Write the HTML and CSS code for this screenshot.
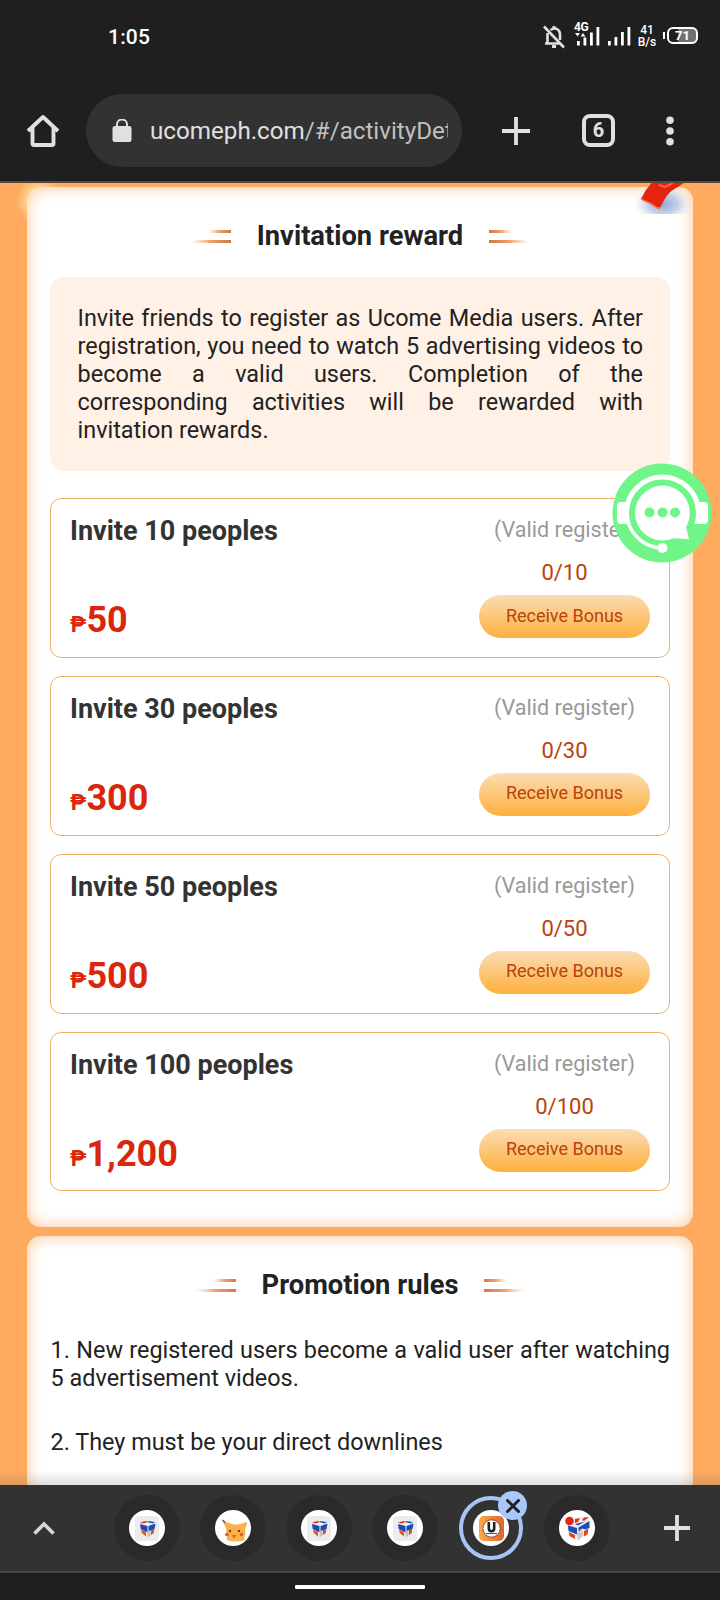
FILE: index.html
```html
<!DOCTYPE html>
<html lang="en">
<head>
<meta charset="utf-8">
<title>Invitation reward</title>
<link rel="stylesheet" href="styles.css">
</head>
<body>
<svg class="defs" width="0" height="0" aria-hidden="true">
  <symbol id="cube" viewBox="0 0 36 36">
    <rect x="6" y="6" width="24" height="25" rx="4" fill="#ececec"/>
    <path d="M11 14l1-2.500 8-1.500 6 2v2l-1 8.500-6 4.500-6-4z" fill="#f3efec"/>
    <path d="M11 12.500l5.500-1.400 3 .6-5 1.900z" fill="#e2342a"/>
    <path d="M19 11l7 1-2.500 1.500-4.500-1.200z" fill="#2451b8"/>
    <path d="M11 14l7.500 2v6.500L11.700 19z" fill="#1d4bb4"/>
    <path d="M26.500 13.500l-7 2.500v5.500l6-2.500z" fill="#1d4bb4"/>
    <path d="M12 19.500l5 2.500v4.500L12.800 23z" fill="#e4542e"/>
    <path d="M18.500 21.500l3-1.500v5.500l-3 2z" fill="#c9c1b8"/>
    <path d="M22 20.500l3.300-1.500-.6 4-2.700 2z" fill="#c8502e"/>
  </symbol>
</svg>

<header class="chrome">
  <div class="status">
    <span class="clock">1:05</span>
    <div class="status-icons">
      <svg class="bell" width="24" height="24" viewBox="0 0 24 24" fill="none" stroke="#e0e0e0" stroke-width="2.600">
        <path d="M2 1.500L22 22.500"/>
        <path d="M8.500 5C14 1.500 18 5 18 9.500V15M5.500 8v10.500h12M3 18.500h3"/>
        <path d="M12 1v3M10 21.500h4" stroke-width="3"/>
      </svg>
      <svg class="signals" width="58" height="26" viewBox="0 0 58 26" fill="#fff">
        <text x="0" y="9" class="net">4G</text>
        <path d="M1 11h5l-2.500 3.500zM6.500 14.500h5L9 11z"/>
        <path d="M3 19h2.800v4.500H3zM9.500 15.500h2.800v8H9.500zM16 10.500h2.800v13H16zM22.500 5h2.800v18.500h-2.800z"/>
        <path d="M34 19h2.800v4.500H34zM40.500 15h2.800v8.500h-2.800zM47 10h2.800v13.500H47zM53.500 5h2.800v18.500h-2.800z"/>
      </svg>
      <span class="speed">41<br>B/s</span>
      <span class="battery">71</span>
    </div>
  </div>
  <div class="toolbar">
    <svg class="home" width="34" height="34" viewBox="0 0 34 34" fill="none" stroke="#e0e0e0" stroke-width="3.900" stroke-linejoin="round">
      <path d="M2 17L17 3l15 14"/><path d="M6.500 14v15.500q0 1.500 1.500 1.500h18q1.500 0 1.500-1.500V14"/>
    </svg>
    <div class="omnibox">
      <svg width="20" height="24" viewBox="0 0 20 24"><rect x=".5" y="7" width="19" height="16" rx="2.500" fill="#e0e0e0"/><path d="M5 8V5.500a5 5 0 0 1 10 0V8" fill="none" stroke="#e0e0e0" stroke-width="2"/></svg>
      <span class="url">ucomeph.com<span class="path">/#/activityDet</span></span>
    </div>
    <svg class="plus" width="30" height="30" viewBox="0 0 30 30" stroke="#e0e0e0" stroke-width="3.800"><path d="M1 15h28M15 1v28"/></svg>
    <span class="tabcount">6</span>
    <svg class="more" width="8" height="30" viewBox="0 0 8 30" fill="#e0e0e0"><circle cx="4" cy="4.200" r="3.800"/><circle cx="4" cy="15" r="3.800"/><circle cx="4" cy="25.800" r="3.800"/></svg>
  </div>
</header>

<main class="page">
  <section class="card reward">
    <svg class="envelope" width="62" height="31" viewBox="0 0 62 31">
      <defs><radialGradient id="sh"><stop offset="0" stop-color="#8fa8d4"/><stop offset=".5" stop-color="#b4c4e2" stop-opacity=".8"/><stop offset="1" stop-color="#dfe6f5" stop-opacity="0"/></radialGradient></defs>
      <ellipse cx="35" cy="21" rx="30" ry="19" fill="url(#sh)"/>
      <path d="M23.500 0Q17 7 13.500 15q0 1 1 1.800 8 3 15 8.200 2 .5 3-1Q38 12 44 7.500L56 0z" fill="#e3240f"/>
      <path d="M13.500 15q0 1 1 1.800 8 3 15 8.200 2 .5 3-1" fill="none" stroke="#f0703c" stroke-width="1.500"/>
      <path d="M31 2l6 2 8-4" fill="none" stroke="#f0684a" stroke-width="2"/>
    </svg>
    <h2 class="title"><svg class="deco" width="42" height="16"><use href="#lines"/></svg><span>Invitation reward</span><svg class="deco flip" width="42" height="16"><use href="#lines"/></svg></h2>
    <p class="notice">Invite friends to register as Ucome Media users. After registration, you need to watch 5 advertising videos to become a valid users. Completion of the corresponding activities will be rewarded with invitation rewards.</p>
    <div class="tiers">
      <article class="tier">
        <div class="left"><h3>Invite 10 peoples</h3><div class="price"><small>₱</small>50</div></div>
        <div class="right"><span class="valid">(Valid register)</span><span class="count">0/10</span><button class="bonus">Receive Bonus</button></div>
      </article>
      <article class="tier">
        <div class="left"><h3>Invite 30 peoples</h3><div class="price"><small>₱</small>300</div></div>
        <div class="right"><span class="valid">(Valid register)</span><span class="count">0/30</span><button class="bonus">Receive Bonus</button></div>
      </article>
      <article class="tier">
        <div class="left"><h3>Invite 50 peoples</h3><div class="price"><small>₱</small>500</div></div>
        <div class="right"><span class="valid">(Valid register)</span><span class="count">0/50</span><button class="bonus">Receive Bonus</button></div>
      </article>
      <article class="tier">
        <div class="left"><h3>Invite 100 peoples</h3><div class="price"><small>₱</small>1,200</div></div>
        <div class="right"><span class="valid">(Valid register)</span><span class="count">0/100</span><button class="bonus">Receive Bonus</button></div>
      </article>
    </div>
  </section>

  <section class="card rules">
    <h2 class="title"><svg class="deco" width="42" height="16"><use href="#lines"/></svg><span>Promotion rules</span><svg class="deco flip" width="42" height="16"><use href="#lines"/></svg></h2>
    <p>1. New registered users become a valid user after watching 5 advertisement videos.</p>
    <p>2. They must be your direct downlines</p>
  </section>

  <svg class="support" width="100" height="100" viewBox="0 0 100 100">
    <circle cx="50" cy="50" r="49.500" fill="#70f588"/>
    <path d="M14.500 50A36 36 0 0 1 86.500 50" fill="none" stroke="#fff" stroke-width="5"/>
    <path d="M15.500 58C21 74 33 84 49 85" fill="none" stroke="#fff" stroke-width="3.500"/>
    <path d="M15 39H9q-4 0-4 4v14q0 4 4 4h9.500q-3-11 0-22zM86 39h6q4 0 4 4v14q0 4-4 4h-9.500q3-11 0-22z" fill="#fff"/>
    <circle cx="50.500" cy="85" r="5" fill="#fff"/>
    <path d="M50.500 22.500a27.500 27.500 0 1 0 11 52.700l15.500 1-3-12.200A27.500 27.500 0 0 0 50.500 22.500z" fill="#fff"/>
    <circle cx="37.500" cy="49.500" r="5" fill="#70f588"/><circle cx="50.500" cy="49.500" r="5" fill="#70f588"/><circle cx="63" cy="49.500" r="5" fill="#70f588"/>
  </svg>
</main>

<nav class="tabs">
  <svg class="chevron" width="22" height="14" viewBox="0 0 22 14" fill="none" stroke="#d8d8d8" stroke-width="3.600"><path d="M1.500 12.500L11 3l9.500 9.500"/></svg>
  <span class="divider"></span>
  <div class="tablist">
    <div class="tab"><svg width="36" height="36"><use href="#cube"/></svg></div>
    <div class="tab"><svg width="36" height="36" viewBox="0 0 36 36">
      <path d="M7 10l7 3 5 1.500h5L31 12l1 1-2 7q1 4-1 8l1 2q-10 3-18 0l-1-12-4-8z" fill="#fbb24c"/>
      <path d="M6.500 9.500l3 1.200 .5 2.800z" fill="#4a3020"/>
      <circle cx="15" cy="21" r="1.200" fill="#6a3d20"/><circle cx="24" cy="21" r="1.200" fill="#6a3d20"/><circle cx="12" cy="24.500" r="1.800" fill="#e05a2c"/><circle cx="26.500" cy="24.500" r="1.800" fill="#e05a2c"/><path d="M16.500 25h5l-2.500 3.500z" fill="#d96a45"/>
    </svg></div>
    <div class="tab"><svg width="36" height="36"><use href="#cube"/></svg></div>
    <div class="tab"><svg width="36" height="36"><use href="#cube"/></svg></div>
    <div class="tab active"><svg width="36" height="36" viewBox="0 0 36 36">
      <defs><linearGradient id="ug"><stop offset="0" stop-color="#fbab4a"/><stop offset="1" stop-color="#e0622f"/></linearGradient></defs>
      <rect x="6" y="6" width="25" height="25" rx="5" fill="url(#ug)"/>
      <circle cx="18.500" cy="18.500" r="8.700" fill="#fff" stroke="#8a4a2c" stroke-width="1"/>
      <path d="M15.800 12v6.500a2.700 2.700 0 0 0 5.400 0V12" fill="none" stroke="#222" stroke-width="2.600"/><path d="M13 23.500h11" stroke="#555" stroke-width="1.200"/>
    </svg><span class="close"><svg width="14" height="14" viewBox="0 0 14 14" stroke="#222" stroke-width="3" stroke-linecap="round"><path d="M1.500 1.500l11 11M12.500 1.500l-11 11"/></svg></span></div>
    <div class="tab"><svg width="36" height="36" viewBox="0 0 36 36">
      <path d="M8 16l8-8 14-1-1 16-11 8-8-5z" fill="#f2eee9"/>
      <path d="M16 9l5-1-2 4-3 1zM25 7.500l5-.5-5 4-2-1z" fill="#e2341f"/>
      <path d="M9 15.500l9 2.500v6.500L9.500 21zM19.500 17.500L30.500 11v7l-4.500 1.500-3-1-3.500 3z" fill="#1c4cb8"/>
      <path d="M9.700 22l6.300 3v4l-5.500-3zM25 21l4.500-2.500-1 6-3.500 2z" fill="#e24420"/>
      <path d="M18 23l5-4 1.500 6.500-5.500 5z" fill="#d3c9ba"/><path d="M16 14l10-2.500-7 4z" fill="#2352bb"/>
      <circle cx="10.500" cy="11" r="4.300" fill="#ea2413"/>
    </svg></div>
  </div>
  <svg class="add" width="26" height="26" viewBox="0 0 26 26" stroke="#e0e0e0" stroke-width="3.800"><path d="M0 13h26M13 0v26"/></svg>
</nav>
<footer class="gesture"><span></span></footer>

<svg class="defs" width="0" height="0" aria-hidden="true">
  <defs><linearGradient id="fade"><stop offset="0" stop-color="#f5b27c" stop-opacity="0"/><stop offset=".5" stop-color="#eca06a"/><stop offset="1" stop-color="#d07848"/></linearGradient></defs>
  <symbol id="lines" viewBox="0 0 42 16"><rect x="19" y="1" width="23" height="3" fill="url(#fade)"/><rect x="2" y="11" width="40" height="3" fill="url(#fade)"/></symbol>
</svg>
</body>
</html>
```
FILE: styles.css
```css
* { box-sizing: border-box; }
body {
  margin: 0;
  width: 720px;
  height: 1600px;
  overflow: hidden;
  display: flex;
  flex-direction: column;
  background: #1f1f1f;
  font-family: Roboto, "Liberation Sans", sans-serif;
  color: #222;
}
.defs { position: absolute; }
h2, h3, p { margin: 0; }
svg { flex: none; display: block; }

.chrome {
  height: 183px;
  flex: none;
  border-bottom: 2px solid #57483a;
  background: #1f1f1f;
  color: #fff;
}
.status {
  height: 94px;
  display: flex;
  justify-content: space-between;
  padding: 22px 22px 0 108px;
}
.clock { font-size: 21px; font-weight: 500; line-height: 30px; letter-spacing: .2px; }
.status-icons { display: flex; align-items: flex-start; }
.bell { margin: 3px 8px 0 0; }
.net { font: bold 12px Roboto, sans-serif; letter-spacing: -.5px; }
.speed {
  margin: 2px 0 0 5px;
  width: 20px;
  font-size: 12px;
  line-height: 12px;
  font-weight: 500;
  text-align: center;
}
.battery {
  position: relative;
  margin: 5px 0 0 10px;
  width: 31px;
  height: 17px;
  border: 2px solid #fff;
  border-radius: 6px;
  background: linear-gradient(90deg, #1f1f1f 35%, #707070 35%);
  font-size: 13px;
  line-height: 13px;
  font-weight: 700;
  text-align: center;
}
.battery::before {
  content: "";
  position: absolute;
  left: -6px;
  top: 3px;
  width: 2px;
  height: 7px;
  background: #fff;
}
.toolbar {
  display: flex;
  align-items: center;
  height: 73px;
  padding-left: 26px;
}
.omnibox {
  display: flex;
  align-items: center;
  width: 376px;
  height: 73px;
  margin-left: 26px;
  padding: 0 14px 0 26px;
  border-radius: 37px;
  background: #323232;
}
.url {
  margin-left: 18px;
  flex: 1;
  overflow: hidden;
  white-space: nowrap;
  font-size: 24.200px;
  line-height: 32px;
  color: #e0e0e0;
}
.path { color: #c0c0c0; }
.plus { margin-left: 39px; }
.tabcount {
  width: 33px;
  height: 33px;
  margin-left: 51px;
  border: 4px solid #e0e0e0;
  border-radius: 8px;
  font-size: 20px;
  line-height: 25px;
  font-weight: 700;
  text-align: center;
  color: #e0e0e0;
}
.more { margin-left: 51px; }

.page {
  position: relative;
  flex: none;
  height: 1302px;
  overflow: hidden;
  padding: 4px 27px 0;
  background: radial-gradient(circle at 40px 18px, #ffd596 12px, rgba(255, 213, 150, 0) 24px), #feab5f;
}
.page::after {
  content: "";
  position: absolute;
  inset: auto 0 0;
  height: 14px;
  background: linear-gradient(rgba(90, 90, 90, 0), rgba(90, 90, 90, .2));
}
.card {
  position: relative;
  border-radius: 14px;
  background: #fff;
  box-shadow: inset 0 0 16px rgba(254, 171, 95, .7);
  padding: 28px 23px 0;
}
.reward { height: 1040px; }
.rules { height: 290px; margin-top: 9px; }
.envelope { position: absolute; right: 3px; top: -4px; }
.title {
  display: flex;
  justify-content: center;
  align-items: center;
  height: 42px;
  font-size: 27.300px;
  line-height: 42px;
  font-weight: 700;
}
.title span { margin: 0 25.500px; }
.deco { margin-top: 1px; }
.flip { transform: scaleX(-1); }
.notice {
  margin-top: 20px;
  height: 194px;
  padding: 27px 27px 27px 27.600px;
  border-radius: 14px;
  background: #fff1e6;
  font-size: 23.400px;
  line-height: 28px;
  text-align: justify;
}
.tiers { display: flex; flex-direction: column; gap: 18.100px; margin-top: 27px; }
.tier {
  display: flex;
  justify-content: space-between;
  height: 159.800px;
  padding: 0 19px 0 19px;
  border: 1px solid #efb068;
  border-radius: 11px;
}
.left { padding-top: 14px; }
h3 { font-size: 27px; line-height: 36px; font-weight: 700; color: #333; }
.price {
  margin-top: 49px;
  font-size: 36px;
  line-height: 44px;
  font-weight: 700;
  color: #d9260c;
}
.price small { font-size: 22px; }
.right {
  display: flex;
  flex-direction: column;
  align-items: center;
  width: 171px;
  padding-top: 17px;
  font-size: 22px;
  line-height: 28px;
}
.valid { font-size: 21.600px; color: #999; white-space: nowrap; }
.count { margin-top: 15px; color: #b9430b; }
.bonus {
  margin-top: 8px;
  width: 171px;
  height: 43px;
  padding: 0 0 3px;
  border: 0;
  border-radius: 22px;
  background: linear-gradient(#fbdcb4, #feb03c);
  font: 18px Roboto, sans-serif;
  color: #b9430b;
}
.rules .title { margin-bottom: 30px; }
.rules p { padding-left: .6px; font-size: 23.400px; line-height: 28px; text-align: justify; margin-bottom: 36px; }
.support { position: absolute; left: 611.500px; top: 279.500px; }

.tabs {
  flex: none;
  height: 88px;
  display: flex;
  align-items: center;
  padding: 0 30px 0 33px;
  background: #323232;
  border-bottom: 2px solid #474747;
}
.divider { width: 1px; height: 24px; margin: 0 22px 0 36px; background: #2e2e2e; }
.tablist { display: flex; gap: 20px; }
.tab {
  position: relative;
  display: flex;
  align-items: center;
  justify-content: center;
  width: 66px;
  height: 66px;
  border-radius: 50%;
  background: #2a2a2a;
}
.tab > svg { border-radius: 50%; background: #fff; }
.active { width: 64px; height: 64px; margin: 1px; border: 4px solid #a8c3f5; background: #323232; }
.close {
  position: absolute;
  left: 35px;
  top: -9px;
  width: 29px;
  height: 29px;
  border-radius: 50%;
  background: #a8c7fa;
  display: flex;
  align-items: center;
  justify-content: center;
}
.add { margin-left: auto; }
.gesture { flex: 1; display: flex; justify-content: center; padding-top: 12px; }
.gesture span { width: 130px; height: 4px; border-radius: 1px; background: #fff; }
```
